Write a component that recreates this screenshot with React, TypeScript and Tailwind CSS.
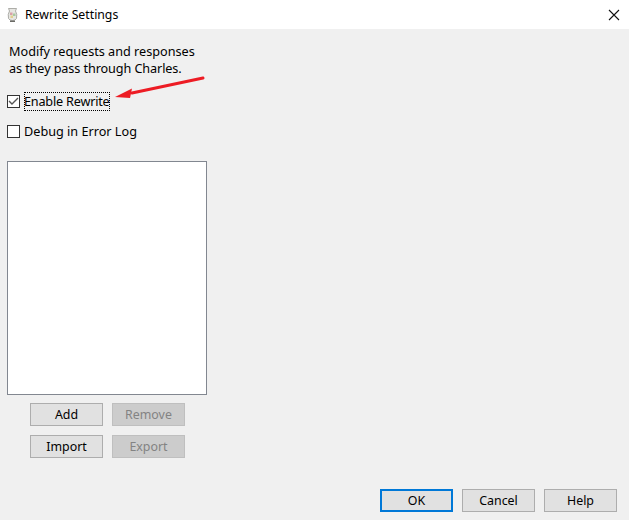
import React from 'react';
import clsx from 'clsx';

const DialogButton: React.FC<{ label: string; disabled?: boolean; primary?: boolean }> = ({ label, disabled, primary }) => (
  <button
    disabled={disabled}
    className={clsx(
      'w-[73px] h-[23px] flex items-center justify-center pt-px text-[12.4px] leading-none border',
      disabled && 'bg-[#cccccc] border-[#bfbfbf] text-[#838383]',
      !disabled && 'bg-[#e1e1e1] text-[#000000]',
      !disabled && !primary && 'border-[#adadad]',
      primary && 'border-2 border-[#0078d7]'
    )}
  >
    {label}
  </button>
);

const CheckRow: React.FC<{ label: string; checked?: boolean; focused?: boolean }> = ({ label, checked, focused }) => (
  <div className="flex items-center h-[19px] pl-[7px]">
    <div className="w-[13px] h-[13px] bg-white border border-[#333333] flex items-center justify-center">
      {checked && (
        <svg width="11" height="11" viewBox="0 0 11 11" fill="none">
          <path d="M1 5 L4 8 L10 2" stroke="#555555" strokeWidth="1.4" />
        </svg>
      )}
    </div>
    <span
      className={clsx(
        'ml-[4px] h-[19px] flex items-center text-[12.66px] text-[#000000] whitespace-nowrap',
        focused && 'w-[86px] tracking-[-0.2px] outline-1 outline-dotted outline-[#000000] -outline-offset-1'
      )}
    >
      {label}
    </span>
  </div>
);

export default function App() {
  return (
    <div className="relative w-[629px] h-[520px] flex flex-col bg-[#f0f0f0] font-['Noto_Sans','Open_Sans',sans-serif] overflow-hidden">
      {/* title bar */}
      <div className="h-[29px] bg-white flex items-center pl-[6px] pr-[8px]">
        <svg width="13" height="16" viewBox="0 0 13 16" className="mr-[6px]">
          <path d="M2.5 1.5 H10.5 L9.5 4 Q11.5 7 10.5 11.5 Q9.5 13.5 6.5 13.5 Q3.5 13.5 2.5 11.5 Q1.5 7 3.5 4 Z" fill="#e6e6e2" stroke="#9a9a95" strokeWidth="0.8" />
          <rect x="4" y="5.5" width="2.5" height="2.5" fill="#d9a0a8" />
          <rect x="7" y="6.5" width="2.5" height="2.5" fill="#a8c8a0" />
          <rect x="4.5" y="8.5" width="2.5" height="2.5" fill="#e0d090" />
          <path d="M4 13.5 H9 V15 H4 Z" fill="#6b6b66" />
        </svg>
        <span className="pt-[2px] text-[12.26px] text-[#000000] flex-1">Rewrite Settings</span>
        <svg width="12" height="12" viewBox="0 0 12 12" fill="none" className="mr-[1px]">
          <path d="M1 1 L11 11 M11 1 L1 11" stroke="#111111" strokeWidth="1.1" />
        </svg>
      </div>

      <div className="flex-1 flex flex-col min-h-0">
        <div className="flex-1 w-[214px] flex flex-col">
          <p className="mt-[14px] pl-[9px] text-[12.66px] leading-[17px] text-[#000000] whitespace-nowrap">
            Modify requests and responses
            <br />
            <span className="tracking-[-0.1px]">as they pass through Charles.</span>
          </p>
          <div className="mt-[15px] flex flex-col gap-[11px]">
            <CheckRow label="Enable Rewrite" checked focused />
            <CheckRow label="Debug in Error Log" />
          </div>
          <div className="mt-[20px] ml-[7px] w-[200px] h-[234px] bg-white border border-[#828790]" />
          <div className="mt-[8px] ml-[30px] grid grid-cols-[73px_73px] gap-x-[9px] gap-y-[9px] w-max">
            <DialogButton label="Add" />
            <DialogButton label="Remove" disabled />
            <DialogButton label="Import" />
            <DialogButton label="Export" disabled />
          </div>
        </div>
        <div className="flex justify-end gap-[9px] pr-[12px] pb-[8px]">
          <DialogButton label="OK" primary />
          <DialogButton label="Cancel" />
          <DialogButton label="Help" />
        </div>
      </div>

      {/* annotation arrow */}
      <svg className="absolute left-[110px] top-[70px]" width="100" height="34" viewBox="0 0 100 34" fill="none">
        <path d="M93 8 L22 23" stroke="#ed1c24" strokeWidth="3" strokeLinecap="round" />
        <path d="M5 27 L22 18.5 L21 23.5 L20 28 Z" fill="#ed1c24" />
      </svg>
    </div>
  );
}
